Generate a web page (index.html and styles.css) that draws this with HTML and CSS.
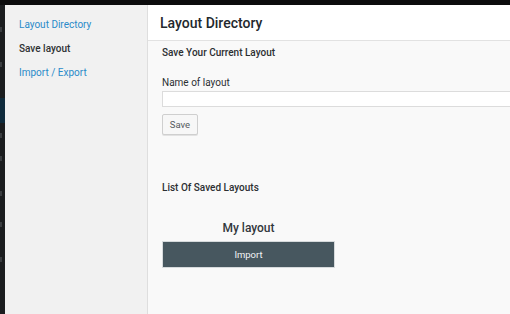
FILE: index.html
```html
<!DOCTYPE html>
<html lang="en">
<head>
<meta charset="utf-8">
<title>Layout Directory</title>
<link rel="stylesheet" href="styles.css">
</head>
<body>
<div class="page">
  <div class="topbar"></div>
  <div class="frame">
    <div class="adminbar">
      <span class="mark m1"></span>
      <span class="mark m2"></span>
      <span class="active"></span>
      <span class="mark m3"></span>
      <span class="mark m4"></span>
      <span class="mark m5"></span>
      <span class="mark m6"></span>
      <span class="mark m7"></span>
    </div>
    <nav class="sidebar">
      <a class="nav-link" href="#">Layout Directory</a>
      <span class="nav-link current">Save layout</span>
      <a class="nav-link" href="#">Import / Export</a>
    </nav>
    <main class="main">
      <header class="header">
        <h1 class="title">Layout Directory</h1>
      </header>
      <section class="content">
        <h2 class="section-title">Save Your Current Layout</h2>
        <label class="field-label" for="layout-name">Name of layout</label>
        <input class="field-input" id="layout-name" type="text">
        <button class="btn-save" type="button">Save</button>
        <h2 class="section-title list-title">List Of Saved Layouts</h2>
        <div class="layout-card">
          <h3 class="layout-name">My layout</h3>
          <button class="btn-import" type="button">Import</button>
        </div>
      </section>
    </main>
  </div>
</div>
</body>
</html>
```
FILE: styles.css
```css
html, body {
  margin: 0;
  padding: 0;
  width: 510px;
  height: 314px;
  overflow: hidden;
  background: #f9f9f9;
  font-family: Roboto, "Liberation Sans", Arial, sans-serif;
}

.page {
  display: flex;
  flex-direction: column;
  height: 314px;
}

.topbar {
  height: 5px;
  background: #0c0c0d;
  flex: none;
}

.frame {
  display: flex;
  flex: 1;
  min-height: 0;
}

.adminbar {
  width: 5px;
  flex: none;
  background: #1b1d1f;
  display: flex;
  flex-direction: column;
  align-items: flex-start;
}

.adminbar .mark {
  display: block;
  width: 2px;
  height: 5px;
  background: #3a3d40;
}

.adminbar .m1 { margin-top: 22px; }
.adminbar .m2 { margin-top: 30px; margin-bottom: 31px; }
.adminbar .active {
  display: block;
  width: 5px;
  height: 25px;
  background: #0f2b3c;
  margin-bottom: 10px;
}
.adminbar .m4 { margin-top: 18px; }
.adminbar .m5 { margin-top: 30px; }
.adminbar .m6 { margin-top: 26px; }
.adminbar .m7 { margin-top: 30px; }

.sidebar {
  width: 128px;
  flex: none;
  background: #f1f1f1;
  border-right: 1px solid #dedede;
  padding: 8px 0 0 14px;
  display: flex;
  flex-direction: column;
}

.nav-link {
  display: block;
  font-size: 10px;
  line-height: 24px;
  color: #2a8bc9;
  text-decoration: none;
}

.nav-link.current {
  color: #2f3133;
  font-weight: 500;
}

.main {
  flex: 1;
  min-width: 0;
  overflow: hidden;
  background: #f9f9f9;
  display: flex;
  flex-direction: column;
}

.header {
  height: 35px;
  background: #ffffff;
  border-bottom: 1px solid #e2e2e2;
  display: flex;
  align-items: center;
  padding-left: 12px;
  flex: none;
}

.title {
  margin: 0;
  font-size: 14px;
  font-weight: 500;
  color: #23282d;
  line-height: 16px;
}

.content {
  padding: 6px 0 0 14px;
  display: flex;
  flex-direction: column;
  align-items: flex-start;
}

.section-title {
  margin: 0;
  font-size: 10px;
  font-weight: 500;
  line-height: 12px;
  color: #2c2f32;
}

.field-label {
  margin-top: 18px;
  font-size: 10px;
  line-height: 12px;
  color: #2c2f32;
}

.field-input {
  margin: 2px 0 0 0;
  width: 400px;
  height: 16px;
  box-sizing: border-box;
  border: 1px solid #dcdcdc;
  background: #ffffff;
  padding: 0;
}

.btn-save {
  margin-top: 7px;
  width: 36px;
  height: 21px;
  box-sizing: border-box;
  border: 1px solid #cfcfcf;
  border-radius: 2px;
  background: #f7f7f7;
  box-shadow: 0 1px 0 #e2e2e2;
  font-family: inherit;
  font-size: 9.5px;
  color: #555a5e;
  padding: 0;
}

.list-title {
  margin-top: 47px;
}

.layout-card {
  margin-top: 27px;
  width: 173px;
  display: flex;
  flex-direction: column;
  align-items: center;
}

.layout-name {
  margin: 0;
  font-size: 12px;
  font-weight: 500;
  line-height: 14px;
  color: #32373c;
}

.btn-import {
  margin-top: 6px;
  width: 173px;
  height: 27px;
  border: 1px solid #d6dadc;
  background: #47575f;
  color: #f2f4f5;
  font-family: inherit;
  font-size: 9.5px;
  padding: 0;
  box-sizing: border-box;
}
```
